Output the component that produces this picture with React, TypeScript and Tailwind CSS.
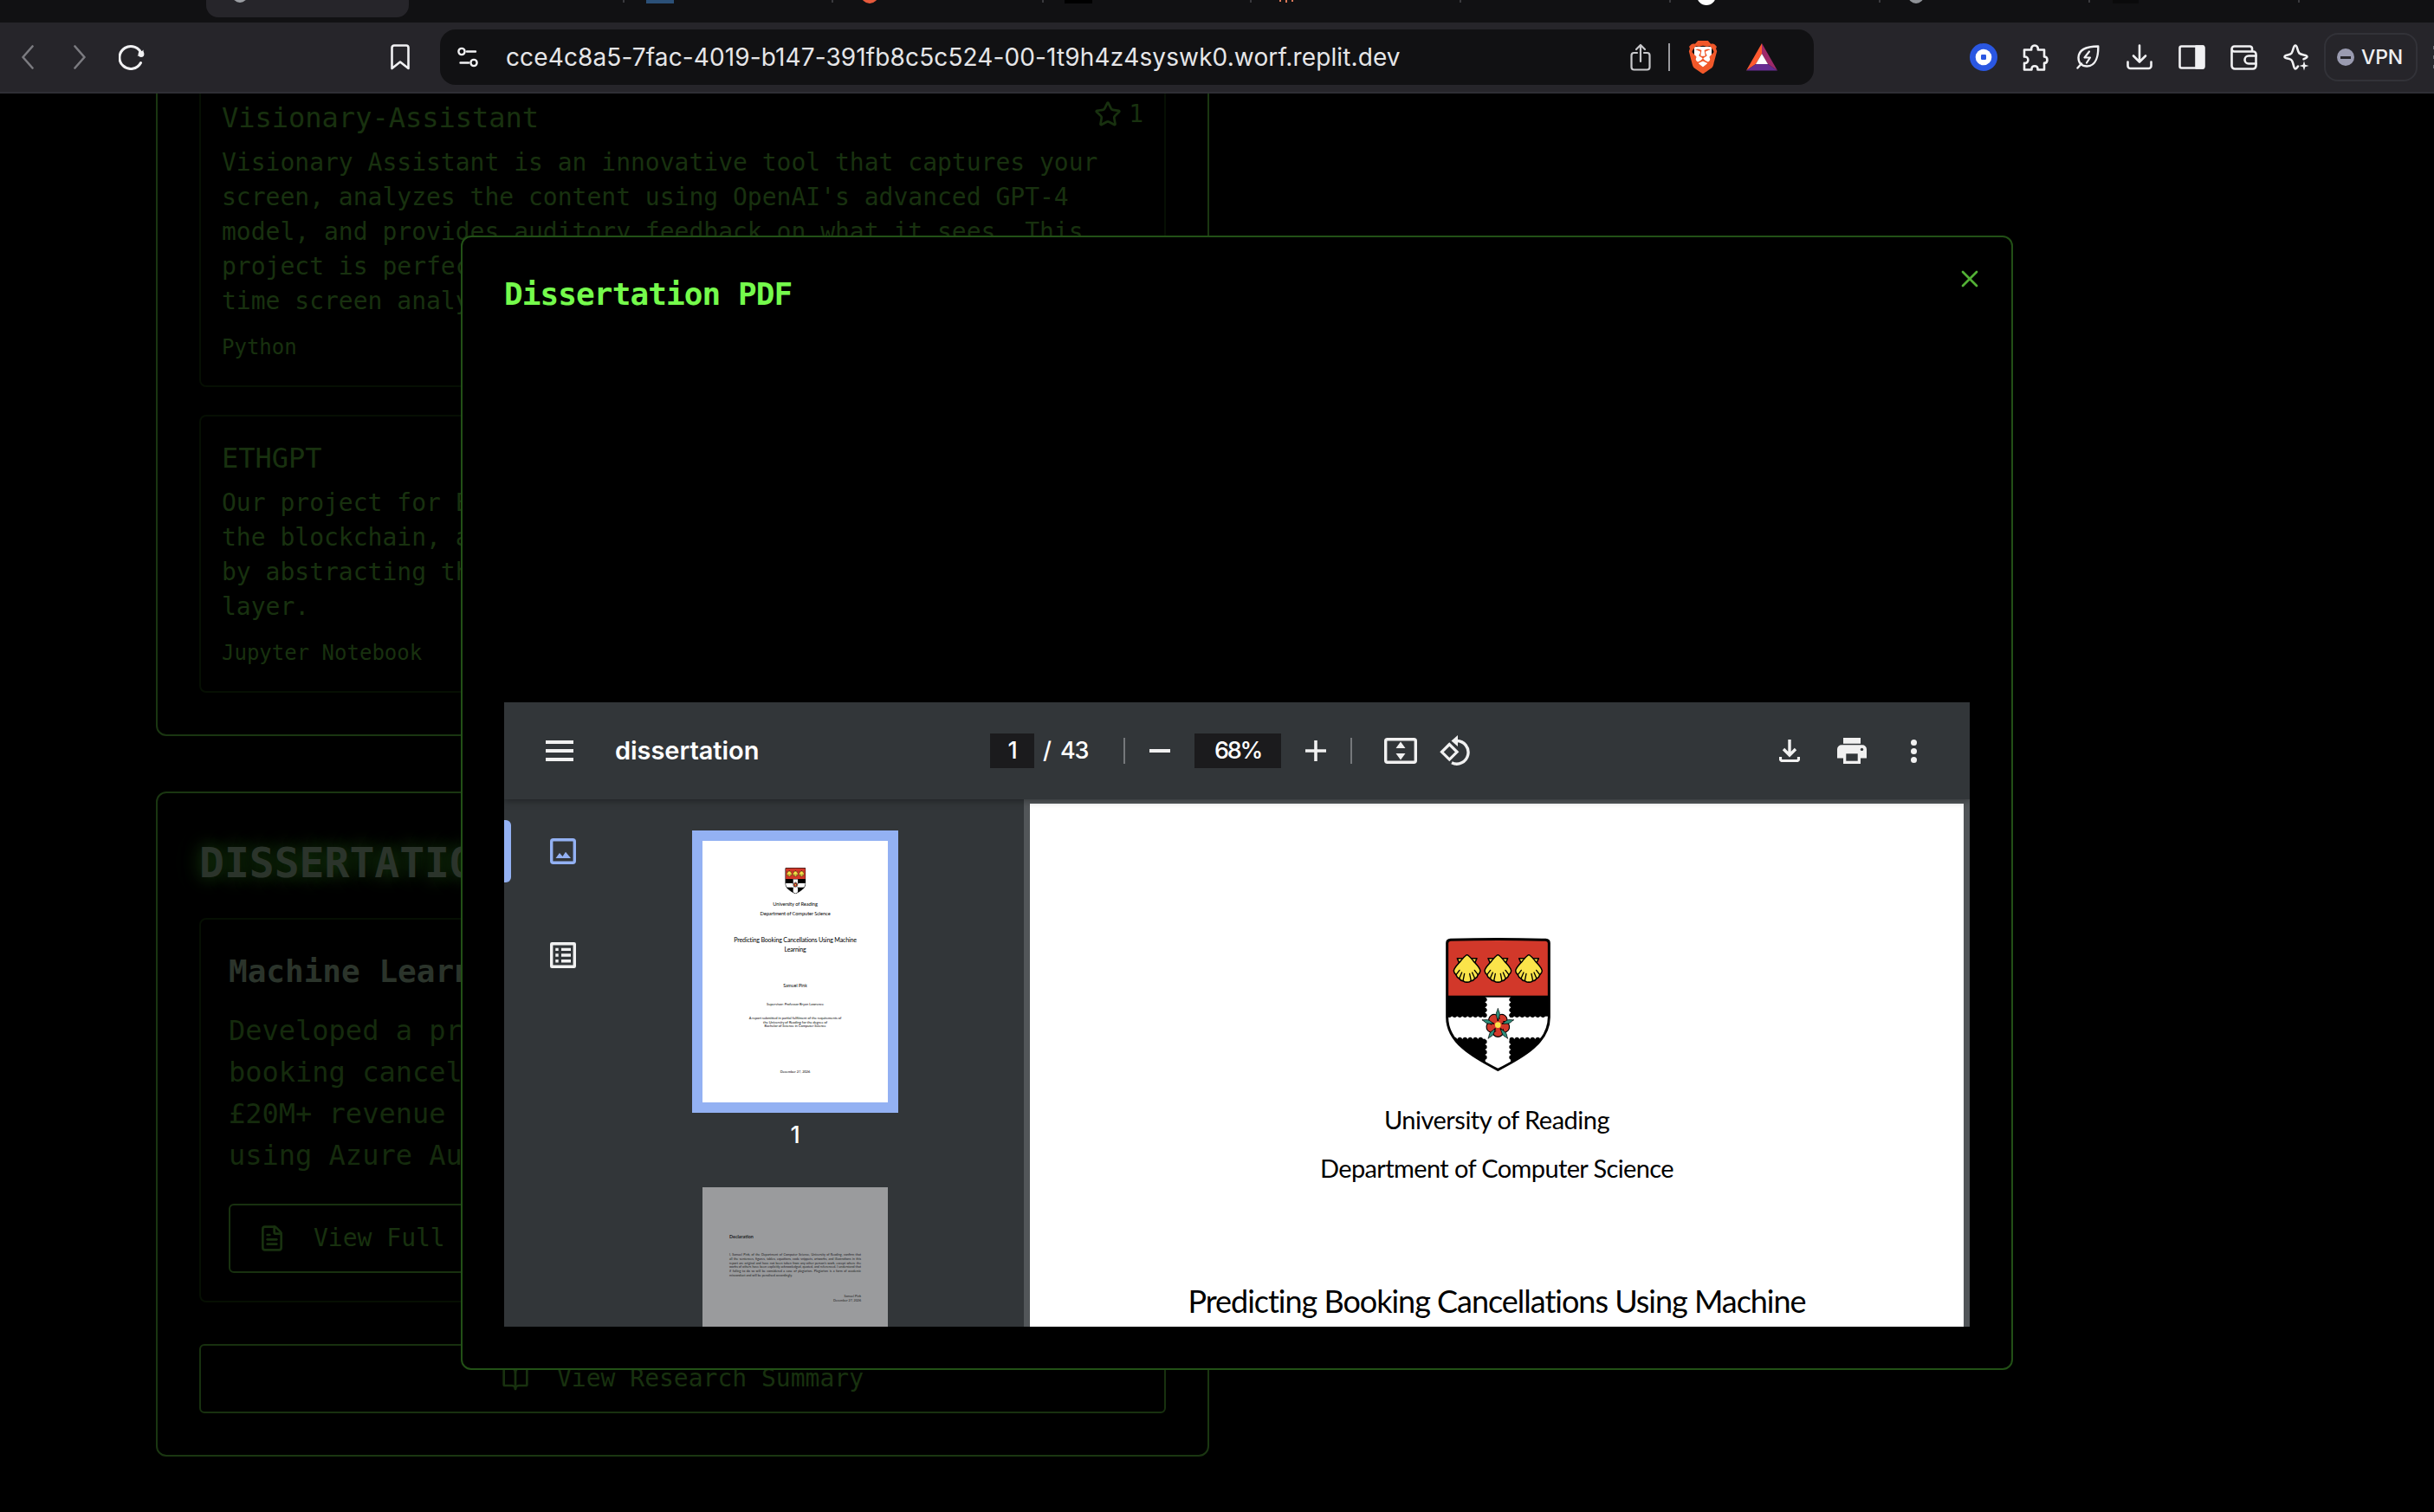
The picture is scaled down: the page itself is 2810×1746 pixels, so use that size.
import React from "react";
import { BookOpen, FileText, Star, X } from "lucide-react";
import { SiBrave } from "react-icons/si";

const MONO = "font-['DejaVu_Sans_Mono',monospace]";
const UI = "font-['Inter',sans-serif]";

/* ---------- Browser chrome ---------- */

function TabSeparator({ className }: { className: string }) {
  return <div className={`h-[3px] w-[2px] shrink-0 bg-[#3a3a3e] ${className}`} />;
}

function TabStrip() {
  return (
    <div className="flex h-[26px] w-full items-start overflow-hidden bg-[#111113]">
      <div className="ml-[238px] flex h-5 w-[234px] shrink-0 justify-start rounded-b-[14px] bg-[#26252a] pl-[30px]">
        <div className="-mt-[15px] size-[18px] rounded-full bg-[#9b9ea3]" />
      </div>
      <TabSeparator className="ml-[247px]" />
      <div className="ml-[25px] h-1 w-8 shrink-0 bg-[#2b5078]" />
      <TabSeparator className="ml-[182px]" />
      <div className="-mt-[16px] ml-[32px] size-5 shrink-0 rounded-full bg-[#e65a3c]" />
      <TabSeparator className="ml-[189px]" />
      <div className="ml-[24px] h-1 w-8 shrink-0 bg-black" />
      <TabSeparator className="ml-[182px]" />
      <div className="ml-[32px] flex w-5 shrink-0 gap-[5px]">
        <div className="h-[2px] w-[2px] bg-[#d97757]" />
        <div className="h-[3px] w-[2px] bg-[#d97757]" />
        <div className="h-[2px] w-[2px] bg-[#d97757]" />
      </div>
      <TabSeparator className="ml-[188px]" />
      <TabSeparator className="ml-[240px]" />
      <div className="-mt-[16px] ml-[30px] size-[22px] shrink-0 rounded-full bg-white" />
      <TabSeparator className="ml-[188px]" />
      <div className="-mt-[14px] ml-[32px] size-[18px] shrink-0 rounded-full bg-[#8f9297]" />
      <TabSeparator className="ml-[190px]" />
      <div className="ml-[26px] h-1 w-[30px] shrink-0 bg-[#0a0a0b]" />
      <TabSeparator className="ml-[184px]" />
    </div>
  );
}

const line = {
  fill: "none",
  stroke: "#f1f1f3",
  strokeWidth: 2.6,
  strokeLinecap: "round" as const,
  strokeLinejoin: "round" as const,
};

function AddressBar() {
  return (
    <div className="ml-[35px] flex h-16 w-[1586px] shrink-0 items-center rounded-[18px] bg-[#111113] pl-5 pr-[42px]">
      <svg className="h-6 w-6 shrink-0" viewBox="0 0 24 24" {...line} strokeWidth={2.4}>
        <circle cx="5" cy="5.5" r="3.6" />
        <path d="M11 5.5H21M3.5 18.5H13" />
        <circle cx="19" cy="18.5" r="3.6" />
      </svg>
      <span className={`ml-8 whitespace-nowrap text-[28px] leading-10 tracking-[0.12px] text-[#e6e6e8] ${UI}`}>
        cce4c8a5-7fac-4019-b147-391fb8c5c524-00-1t9h4z4syswk0.worf.replit.dev
      </span>
      <svg className="ml-auto h-8 w-6 shrink-0" viewBox="0 0 24 32" {...line} stroke="#c9c9cc" strokeWidth={2.2}>
        <path d="M8 11H4.500a3 3 0 0 0-3 3V27.500a3 3 0 0 0 3 3H19.500a3 3 0 0 0 3-3V14a3 3 0 0 0-3-3H16" />
        <path d="M12 21V2.500M7 7 12 2l5 5" />
      </svg>
      <div className="ml-5 h-8 w-[2px] shrink-0 bg-[#9a9a9e]" />
      <div className="ml-[19px] grid h-10 w-[38px] shrink-0 place-items-center *:col-start-1 *:row-start-1">
        <div className="h-6 w-5 rounded-b-lg bg-white" />
        <SiBrave size={38} className="text-[#f1582a]" />
      </div>
      <svg className="ml-[31px] h-8 w-9 shrink-0" viewBox="0 0 36 32">
        <path d="M18 0 0 31.500 11 24 18 12z" fill="#ff5a30" />
        <path d="M18 0 36 31.500 25 24 18 12z" fill="#9e2a6a" />
        <path d="M0 31.500H36L25 24H11z" fill="#662d91" />
        <path d="M18 12 11 24H25z" fill="#fff" />
      </svg>
    </div>
  );
}

function Toolbar() {
  return (
    <div className="flex h-[82px] w-full items-center overflow-hidden border-b-2 border-[#2f2f35] bg-[#26252a]">
      <svg className="ml-[25px] h-7 w-[14px] shrink-0" viewBox="0 0 14 28" {...line} stroke="#7b7b80">
        <path d="M12.500 1.500 1.500 14l11 12.500" />
      </svg>
      <svg className="ml-[46px] h-7 w-[14px] shrink-0" viewBox="0 0 14 28" {...line} stroke="#7b7b80">
        <path d="M1.500 1.500 12.500 14l-11 12.500" />
      </svg>
      <svg className="ml-[38px] h-[30px] w-[30px] shrink-0" viewBox="0 0 30 30" {...line} strokeWidth={3}>
        <path d="M25.500 21.500A13 13 0 1 1 26.500 12" />
        <circle cx="26" cy="11.500" r="3.400" fill="#f1f1f3" stroke="none" />
        <path d="M28.500 6.500v7h-7z" fill="#f1f1f3" stroke="none" />
      </svg>
      <svg className="ml-[284px] h-[30px] w-[22px] shrink-0" viewBox="0 0 22 30" {...line}>
        <path d="M4 1.500H18a2.500 2.500 0 0 1 2.500 2.500V28L11 20.500 1.500 28V4A2.500 2.500 0 0 1 4 1.500z" />
      </svg>

      <AddressBar />

      <svg className="ml-[180px] h-8 w-8 shrink-0" viewBox="0 0 32 32">
        <circle cx="16" cy="16" r="16" fill="#2a57e2" />
        <circle cx="16" cy="16" r="9.300" fill="#fff" />
        <rect x="13" y="13" width="6" height="6" rx="1.200" fill="#2a57e2" />
      </svg>
      <svg className="ml-7 h-[31px] w-[31px] shrink-0" viewBox="0 0 31 31" {...line}>
        <path d="M3 6.500h8.200c-.5-3.200 1.300-5 3.800-5s4.300 1.800 3.800 5h7.200v8c2.300 0 3.500 1.700 3.500 3.700s-1.200 3.700-3.500 3.700v7.600h-7.500c.3-3-1.400-4.300-3.500-4.300s-3.800 1.300-3.500 4.300H3v-7.600c2.800.3 4.400-1.500 4.400-3.700s-1.600-4-4.400-3.700z" />
      </svg>
      <svg className="ml-8 h-7 w-[27px] shrink-0" viewBox="0 0 27 28" {...line} strokeWidth={2.4}>
        <path d="M1.500 26.500 6 21.500M25.300 1.500C15 1.500 3 3 2.500 14.500c0 6.500 4 10 10 10C23 24 25.500 12 25.300 1.500z" />
        <path d="M15 7.500 9.500 14.500H16L12 20.500" strokeWidth={2.2} />
      </svg>
      <svg className="ml-[31px] h-[30px] w-[30px] shrink-0" viewBox="0 0 30 30" {...line}>
        <path d="M15 1.500V20M8 13.500l7 7 7-7M1.500 20.500V25a3 3 0 0 0 3 3h21a3 3 0 0 0 3-3V20.500" />
      </svg>
      <svg className="ml-[30px] h-7 w-[31px] shrink-0" viewBox="0 0 31 28" {...line}>
        <rect x="1.500" y="1.500" width="28" height="25" rx="2" />
        <path d="M20.500 1.500h8v25h-8z" fill="#f1f1f3" />
      </svg>
      <svg className="ml-[29px] h-[29px] w-[31px] shrink-0" viewBox="0 0 31 29" {...line}>
        <path d="M25 7V4a2.500 2.500 0 0 0-2.500-2.500H4.500a3 3 0 0 0 0 6H26.500a3 3 0 0 1 3 3V24a3.500 3.500 0 0 1-3.500 3.500H5A3.500 3.500 0 0 1 1.500 24V4.500" />
        <path d="M29.500 12.500H21a4 4 0 0 0 0 9h8.500" />
      </svg>
      <svg className="ml-[30px] h-[31px] w-[30px] shrink-0" viewBox="0 0 30 31" {...line}>
        <path d="M17 25.500c-1 1.500-2 3-3 3-2.500 0-2-8.500-5-10.500S1.500 17 1.500 14.500s6-1.500 8-4 2-9 4.500-9 2 6.500 4.500 9 9 1.500 9 4c0 1-2 2-4 2.700" />
        <path d="M24 19.500l1.300 4.200 4.200 1.300-4.200 1.300L24 30.500l-1.300-4.200L18.500 25l4.200-1.300z" fill="#f1f1f3" stroke="none" />
      </svg>
      <div className="ml-[17px] flex h-14 w-[108px] shrink-0 items-center rounded-2xl border-2 border-[#323238] pl-[13px]">
        <div className="flex size-5 items-center justify-center rounded-full bg-[#9a9bb0]">
          <div className="h-[3px] w-3 bg-[#26252a]" />
        </div>
        <span className={`ml-2 text-[23px] leading-8 font-medium tracking-[-0.1px] text-[#efeff1] ${UI}`}>VPN</span>
      </div>
      <div className="ml-[18px] flex shrink-0 flex-col gap-[7px]">
        <div className="size-1 bg-[#6d6d72]" />
        <div className="size-1 bg-[#6d6d72]" />
        <div className="size-1 bg-[#6d6d72]" />
      </div>
    </div>
  );
}

/* ---------- Page behind the dialog ---------- */

function RepoCard(props: { title: string; stars?: number; lines: string[]; language: string }) {
  return (
    <div className="rounded-lg border-2 border-[#060f03] px-6 pt-6 pb-7 text-[#18310f]">
      <div className="flex items-start justify-between">
        <h3 className="text-[32px] leading-[48px]">{props.title}</h3>
        {props.stars !== undefined && (
          <div className="flex items-center gap-2">
            <Star className="size-8" strokeWidth={2} />
            <span className="text-[28px] leading-10">{props.stars}</span>
          </div>
        )}
      </div>
      <p className="mt-2 whitespace-nowrap text-[28px] leading-10">
        {props.lines.map((l) => (
          <span key={l} className="block">
            {l}
          </span>
        ))}
      </p>
      <div className="mt-[17px] text-[24px] leading-8">{props.language}</div>
    </div>
  );
}

function PageContent() {
  return (
    <div className={`-mt-[72px] ml-[180px] flex w-[1216px] flex-col gap-16 ${MONO}`}>
      <section className="flex flex-col gap-8 rounded-xl border-2 border-[#1a3611] px-12 pt-12 pb-12">
        <RepoCard
          title="Visionary-Assistant"
          stars={1}
          lines={[
            "Visionary Assistant is an innovative tool that captures your",
            "screen, analyzes the content using OpenAI's advanced GPT-4",
            "model, and provides auditory feedback on what it sees. This",
            "project is perfect",
            "time screen analy",
          ]}
          language="Python"
        />
        <RepoCard
          title="ETHGPT"
          lines={["Our project for E", "the blockchain, a", "by abstracting th", "layer."]}
          language="Jupyter Notebook"
        />
      </section>

      <section className="rounded-xl border-2 border-[#1a3611] p-12">
        <h2 className="text-[48px] font-bold leading-[64px] text-[#2b342b] [text-shadow:0_0_20px_#1a4310,0_0_40px_#0c1f08]">
          DISSERTATION
        </h2>
        <div className="mt-8 rounded-lg border-2 border-[#060f03] p-8">
          <h3 className="text-[36px] font-bold leading-[56px] text-[#2b342b]">Machine Learn</h3>
          <p className="mt-4 whitespace-nowrap text-[32px] leading-[48px] text-[#152b0d]">
            <span className="block">Developed a pr</span>
            <span className="block">booking cancel</span>
            <span className="block">£20M+ revenue</span>
            <span className="block">using Azure Au</span>
          </p>
          <div className="mt-8 flex h-20 items-center rounded-md border-2 border-[#18310f] px-8 text-[28px] leading-10 text-[#18310f]">
            <FileText className="mr-8 size-8" strokeWidth={2} />
            View Full
          </div>
        </div>
        <div className="mt-12 flex h-20 items-center justify-center rounded-md border-2 border-[#18310f] text-[28px] leading-10 text-[#18310f]">
          <BookOpen className="mr-8 size-8" strokeWidth={2} />
          View Research Summary
        </div>
      </section>
    </div>
  );
}

/* ---------- PDF document ---------- */

const teeth = (from: number, to: number) => {
  const out: number[] = [];
  for (let v = from; v <= to; v += 18) out.push(v);
  return out;
};

function Shell({ cx }: { cx: number }) {
  return (
    <g transform={`translate(${cx} 176)`} stroke="#000" strokeWidth="4.500" strokeLinejoin="round" strokeLinecap="round">
      <path d="M-34-35H34L24-12H-24z" fill="#fbe44a" />
      <path
        d="M0-47C8-44 13-36 22-26C32-14 44-4 46 8Q45 17 38 22Q35 32 27 35Q22 43 14 43Q7 49 0 47Q-7 49-14 43Q-22 43-27 35Q-35 32-38 22Q-45 17-46 8C-44-4-32-14-22-26C-13-36-8-44 0-47z"
        fill="#fbe44a"
      />
      <path d="M38 22 26 6M27 35 18 14M14 43 9 18M-14 43-9 18M-27 35-18 14M-38 22-26 6" strokeWidth="4" />
    </g>
  );
}

function Crest() {
  const angles = [0, 72, 144, 216, 288];
  const shield =
    "M212 88Q212 78 224 77Q388 72 553 77Q565 78 565 88V345C565 430 480 480 388 527C297 480 212 430 212 345z";
  return (
    <svg className="ml-[2px] h-[154px] w-[121px] shrink-0" viewBox="207 70 363 462">
      <defs>
        <clipPath id="shield">
          <path d={shield} />
        </clipPath>
      </defs>
      <path d={shield} fill="#000" />
      <g clipPath="url(#shield)">
        <rect x="212" y="76" width="353" height="194" fill="#d2382a" />
        <rect x="344" y="276" width="88" height="260" fill="#fff" />
        <rect x="212" y="342" width="353" height="78" fill="#fff" />
        {teeth(220, 338).map((x) => (
          <g key={x}>
            <circle cx={x} cy="338" r="8" />
            <circle cx={x + 216} cy="338" r="8" />
            <circle cx={x} cy="422" r="8" />
            <circle cx={x + 216} cy="422" r="8" />
          </g>
        ))}
        {[...teeth(284, 338), ...teeth(430, 500)].map((y) => (
          <g key={y}>
            <circle cx="342" cy={y} r="8" />
            <circle cx="435" cy={y} r="8" />
          </g>
        ))}
      </g>
      <path d={shield} fill="none" stroke="#000" strokeWidth="9" />
      <Shell cx={281} />
      <Shell cx={388} />
      <Shell cx={495} />
      <g transform="translate(388 372)" stroke="#000" strokeWidth="3.500">
        {angles.map((a) => (
          <circle key={a} cx="0" cy="-22" r="19" fill="#d2382a" transform={`rotate(${a + 36})`} />
        ))}
        <circle r="22" fill="#d2382a" stroke="none" />
        {angles.map((a) => (
          <path key={a} d="M0-14V-30" strokeWidth="5" transform={`rotate(${a})`} />
        ))}
        {angles.map((a) => (
          <path key={a} d="M0-58C2-48 8-42 6-34L2-20H-2L-6-34C-8-42-2-48 0-58z" fill="#2f8f7c" strokeWidth="2" transform={`rotate(${a})`} />
        ))}
        <circle r="10" fill="#fbe44a" stroke="none" />
      </g>
    </svg>
  );
}

function TitlePage() {
  return (
    <div className="flex h-[1521px] w-[1078px] shrink-0 flex-col items-center whitespace-nowrap bg-white pt-[155px] text-center font-['Lato',sans-serif] text-black">
      <Crest />
      <div className="mt-7 text-[29px] leading-[56px] tracking-[-0.5px]">University of Reading</div>
      <div className="text-[29px] leading-[56px] tracking-[-0.62px]">Department of Computer Science</div>
      <div className="mt-[98px] text-[36px] leading-[54px] tracking-[-1.02px]">
        Predicting Booking Cancellations Using Machine
        <br />
        Learning
      </div>
      <div className="mt-[170px] text-[26px] leading-[30px]">Samuel Pink</div>
      <div className="mt-[77px] text-[20px] leading-[30px]">Supervisor: Professor Bryan Lawrence</div>
      <div className="mt-[54px] text-[20px] leading-[24.5px]">
        A report submitted in partial fulfilment of the requirements of
        <br />
        the University of Reading for the degree of
        <br />
        Bachelor of Science in Computer Science
      </div>
      <div className="mt-[234px] text-[20px] leading-[30px]">December 27, 2026</div>
    </div>
  );
}

const declaration = [
  "I, Samuel Pink, of the Department of Computer Science, University of Reading, confirm that",
  "all the sentences, figures, tables, equations, code snippets, artworks, and illustrations in this",
  "report are original and have not been taken from any other person's work, except where the",
  "works of others have been explicitly acknowledged, quoted, and referenced. I understand that",
  "if failing to do so will be considered a case of plagiarism. Plagiarism is a form of academic",
];

function DeclarationPage() {
  return (
    <div className="flex h-[820px] w-[1078px] flex-col bg-[#9a9b9d] px-[156px] pt-[268px] font-['Lato',sans-serif] text-[18.5px] leading-[24.4px] text-[#1c1c1d]">
      <div className="text-[27px] font-bold leading-[38px]">Declaration</div>
      <div className="mt-[72px]">
        {declaration.map((l) => (
          <div key={l} className="whitespace-nowrap [text-align-last:justify]">
            {l}
          </div>
        ))}
        <div>misconduct and will be penalised accordingly.</div>
      </div>
      <div className="mt-[96px] text-right">
        Samuel Pink
        <br />
        December 27, 2026
      </div>
    </div>
  );
}

function Thumbnail({ children, selected }: { children: React.ReactNode; selected?: boolean }) {
  return (
    <div className={`w-[238px] shrink-0 border-12 ${selected ? "border-[#93b1f3]" : "border-transparent"}`}>
      <div className="h-[302px] w-[214px] overflow-hidden">
        <div className="w-[1078px] origin-top-left scale-[0.1986]">{children}</div>
      </div>
    </div>
  );
}

/* ---------- PDF viewer ---------- */

function Divider({ className = "" }: { className?: string }) {
  return <div className={`h-[30px] w-[2px] shrink-0 bg-[#75787b] ${className}`} />;
}

function ViewerToolbar() {
  return (
    <div className={`relative z-10 flex h-28 w-full items-center bg-[#323639] text-[27px] font-medium leading-10 tracking-[-1.2px] text-white shadow-[0_2px_8px_rgba(0,0,0,0.35)] ${UI}`}>
      <div className="ml-12 flex w-8 shrink-0 flex-col gap-[6px]">
        <div className="h-1 bg-[#f1f1f1]" />
        <div className="h-1 bg-[#f1f1f1]" />
        <div className="h-1 bg-[#f1f1f1]" />
      </div>
      <div className="ml-12 w-[433px] shrink-0 text-[29px] font-semibold tracking-[-0.05px]">dissertation</div>
      <div className="flex h-10 w-[51px] shrink-0 items-center justify-center bg-[#1b1b1d]">1</div>
      <div className="ml-[10px] w-3 shrink-0">/</div>
      <div className="ml-[8px] w-[73px] shrink-0">43</div>
      <Divider />
      <div className="ml-7 h-1 w-6 shrink-0 bg-[#f1f1f1]" />
      <div className="ml-7 flex h-10 w-[100px] shrink-0 items-center justify-center bg-[#1b1b1d] tracking-[-2.2px]">68%</div>
      <svg className="ml-7 h-6 w-6 shrink-0" viewBox="0 0 24 24">
        <path d="M0 12H24M12 0V24" stroke="#f1f1f1" strokeWidth="3.600" />
      </svg>
      <Divider className="ml-7" />
      <svg className="ml-[37px] h-[30px] w-[38px] shrink-0" viewBox="0 0 38 30">
        <rect x="1.700" y="1.700" width="34.600" height="26.600" rx="2" fill="none" stroke="#f1f1f1" strokeWidth="3.400" />
        <path d="M19 4.500 24.500 12h-11zM19 25.500 24.500 18h-11z" fill="#f1f1f1" />
      </svg>
      <svg className="ml-[26px] h-[36px] w-[36px] shrink-0" viewBox="0 0 36 36">
        <path d="M11.300 10.500 2.500 19.300l8.800 8.800 8.800-8.800z" fill="none" stroke="#f1f1f1" strokeWidth="3.200" />
        <path d="M20 6.500A13.300 13.300 0 1 1 14 31.800" fill="none" stroke="#f1f1f1" strokeWidth="3.400" />
        <path d="M21 0V13L13.500 6.500z" fill="#f1f1f1" />
      </svg>
      <svg className="ml-auto h-[26px] w-6 shrink-0" viewBox="0 0 24 26">
        <path d="M12 0V17M5 11l7 7 7-7" fill="none" stroke="#f1f1f1" strokeWidth="3.400" />
        <path d="M1.500 20v2.500a2 2 0 0 0 2 2h17a2 2 0 0 0 2-2V20" fill="none" stroke="#f1f1f1" strokeWidth="3.200" />
      </svg>
      <svg className="ml-[43px] h-[30px] w-[34px] shrink-0" viewBox="0 0 34 30">
        <path d="M7 0H27V6.700H7zM5 8.300H29a5 5 0 0 1 5 5V23.500H27V30H7V23.500H0V13.300a5 5 0 0 1 5-5z" fill="#f1f1f1" />
        <path d="M10.300 18.300H23.700V26.700H10.300z" fill="#323639" />
        <circle cx="28.500" cy="13.400" r="1.700" fill="#323639" />
      </svg>
      <div className="ml-[51px] mr-[61px] flex shrink-0 flex-col gap-[3px]">
        <div className="size-[7px] rounded-full bg-[#f1f1f1]" />
        <div className="size-[7px] rounded-full bg-[#f1f1f1]" />
        <div className="size-[7px] rounded-full bg-[#f1f1f1]" />
      </div>
    </div>
  );
}

function Sidebar() {
  return (
    <div className="flex w-[600px] shrink-0 bg-[#323639]">
      <div className="flex w-[217px] shrink-0 items-start">
        <div className="mt-6 h-[72px] w-2 rounded-r-md bg-[#93b1f3]" />
        <div className="ml-[45px] mt-[45px] flex flex-col gap-[90px]">
          <svg className="size-[30px]" viewBox="0 0 30 30">
            <rect x="1.700" y="1.700" width="26.600" height="26.600" rx="2" fill="none" stroke="#93b1f3" strokeWidth="3.400" />
            <path d="M6.500 23 11 17l3.500 4L18 15.700 24 23z" fill="#93b1f3" />
          </svg>
          <svg className="size-[30px]" viewBox="0 0 30 30">
            <rect x="1.700" y="1.700" width="26.600" height="26.600" rx="0.500" fill="none" stroke="#f1f1f1" strokeWidth="3.400" />
            <path
              d="M6.300 6.700h3.400v3.400H6.300zM6.300 13.300h3.400v3.400H6.300zM6.300 20h3.400v3.400H6.300zM13 6.700h11v3.400H13zM13 13.300h11v3.400H13zM13 20h11v3.400H13z"
              fill="#f1f1f1"
            />
          </svg>
        </div>
      </div>
      <div className="flex flex-col items-center pt-9">
        <Thumbnail selected>
          <TitlePage />
        </Thumbnail>
        <div className={`mb-7 mt-[6px] text-[27px] font-medium leading-10 text-white ${UI}`}>1</div>
        <Thumbnail>
          <DeclarationPage />
        </Thumbnail>
      </div>
    </div>
  );
}

function PdfViewer() {
  return (
    <div className="flex h-[721px] w-full flex-col overflow-hidden">
      <ViewerToolbar />
      <div className="flex h-[609px] w-full overflow-hidden bg-[#525659]">
        <Sidebar />
        <div className="ml-[7px] mt-[5px] shrink-0">
          <TitlePage />
        </div>
      </div>
    </div>
  );
}

function DissertationDialog() {
  return (
    <div className="absolute left-[532px] top-[164px] flex h-[1310px] w-[1792px] flex-col rounded-xl border-2 border-[#225016] bg-black px-12 pb-12">
      <div className="flex items-start justify-between">
        <h1 className={`mt-[46px] text-[36px] font-bold leading-[40px] tracking-[-0.9px] text-[#75fb4c] ${MONO}`}>Dissertation PDF</h1>
        <X className="-mr-4 mt-8 size-8 text-[#52b035]" strokeWidth={2} />
      </div>
      <div className="mt-auto">
        <PdfViewer />
      </div>
    </div>
  );
}

export default function App() {
  return (
    <div className="flex h-[1746px] w-[2810px] flex-col overflow-hidden bg-black">
      <header className="shrink-0">
        <TabStrip />
        <Toolbar />
      </header>
      <main className="relative h-[1638px] w-full overflow-hidden">
        <PageContent />
        <DissertationDialog />
      </main>
    </div>
  );
}
